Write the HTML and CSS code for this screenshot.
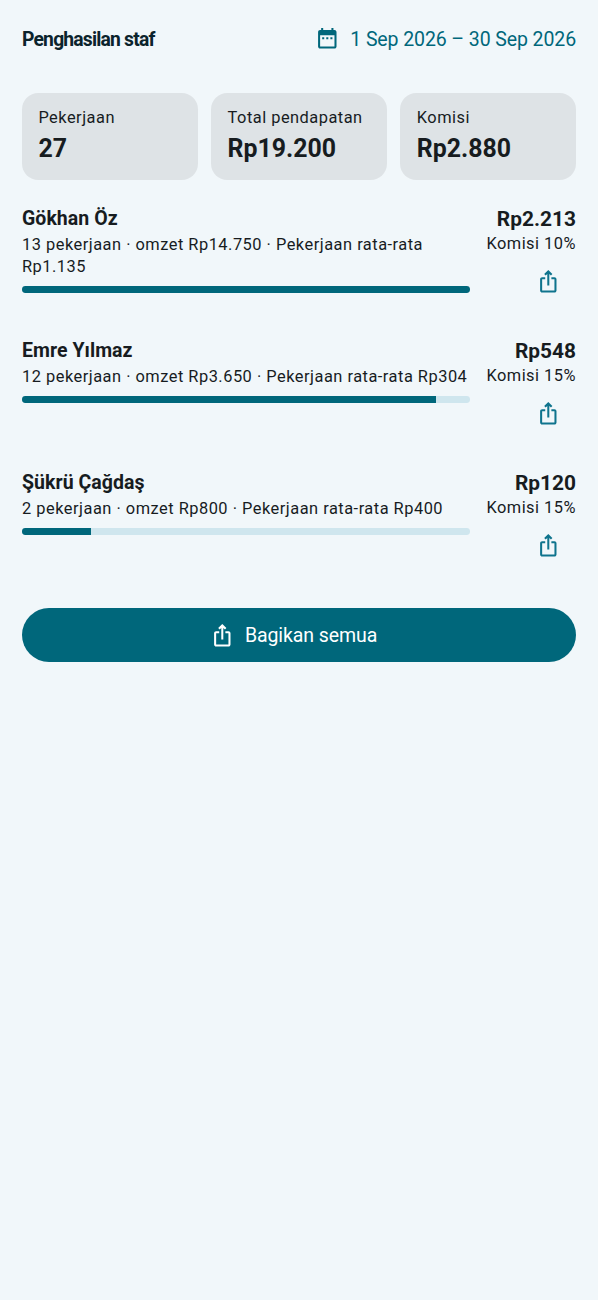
FILE: index.html
```html
<!DOCTYPE html>
<html lang="id">
<head>
<meta charset="utf-8">
<title>Penghasilan staf</title>
<link rel="stylesheet" href="styles.css">
</head>
<body>
<svg width="0" height="0" class="sprite" aria-hidden="true">
  <symbol id="share" viewBox="0 0 24 24"><path d="M16 5l-1.42 1.42-1.59-1.59V16h-1.98V4.83L9.42 6.42 8 5l4-4 4 4zm4 5v11c0 1.1-.9 2-2 2H6c-1.11 0-2-.9-2-2V10c0-1.11.89-2 2-2h3v2H6v11h12V10h-3V8h3c1.1 0 2 .89 2 2z"/></symbol>
  <symbol id="calendar" viewBox="0 0 24 24"><path d="M9 11H7v2h2v-2zm4 0h-2v2h2v-2zm4 0h-2v2h2v-2zm2-7h-1V2h-2v2H8V2H6v2H5c-1.11 0-1.99.9-1.99 2L3 20c0 1.1.89 2 2 2h14c1.1 0 2-.9 2-2V6c0-1.1-.9-2-2-2zm0 16H5V9h14v11z"/></symbol>
</svg>
<main class="page">
  <header class="header">
    <h1 class="title">Penghasilan staf</h1>
    <div class="range"><svg class="icon"><use href="#calendar"/></svg><span class="range-text">1 Sep 2026 – 30 Sep 2026</span></div>
  </header>
  <section class="stats">
    <div class="card"><div class="label">Pekerjaan</div><div class="value">27</div></div>
    <div class="card"><div class="label">Total pendapatan</div><div class="value">Rp19.200</div></div>
    <div class="card"><div class="label">Komisi</div><div class="value">Rp2.880</div></div>
  </section>
  <section class="staff">
    <article class="row">
      <div class="info">
        <h2 class="name">Gökhan Öz</h2>
        <p class="detail">13 pekerjaan · omzet Rp14.750 · Pekerjaan rata-rata Rp1.135</p>
        <div class="track"><div class="fill" style="width:100%"></div></div>
      </div>
      <div class="pay"><div class="amount">Rp2.213</div><div class="rate">Komisi 10%</div><svg class="icon share"><use href="#share"/></svg></div>
    </article>
    <article class="row">
      <div class="info">
        <h2 class="name">Emre Yılmaz</h2>
        <p class="detail">12 pekerjaan · omzet Rp3.650 · Pekerjaan rata-rata Rp304</p>
        <div class="track"><div class="fill" style="width:92.4%"></div></div>
      </div>
      <div class="pay"><div class="amount">Rp548</div><div class="rate">Komisi 15%</div><svg class="icon share"><use href="#share"/></svg></div>
    </article>
    <article class="row">
      <div class="info">
        <h2 class="name">Şükrü Çağdaş</h2>
        <p class="detail">2 pekerjaan · omzet Rp800 · Pekerjaan rata-rata Rp400</p>
        <div class="track"><div class="fill" style="width:15.4%"></div></div>
      </div>
      <div class="pay"><div class="amount">Rp120</div><div class="rate">Komisi 15%</div><svg class="icon share"><use href="#share"/></svg></div>
    </article>
  </section>
  <button class="share-all"><svg class="icon"><use href="#share"/></svg><span class="share-text">Bagikan semua</span></button>
</main>
</body>
</html>
```
FILE: styles.css
```css
* { box-sizing: border-box; }
body { margin: 0; background: #f1f7fa; color: #171c1f; font-family: Roboto, sans-serif; }
.sprite { display: none; }
.page { min-height: 1300px; padding: 0 22px; }
.icon { width: 24.6px; height: 24.6px; fill: currentColor; flex: none; display: block; }
.header { display: flex; justify-content: space-between; align-items: center; height: 77px; }
.title { margin: 0; padding-top: 1px; font-size: 19.3px; font-weight: 700; letter-spacing: -0.8px; color: #0b232c; }
.range { display: flex; align-items: center; gap: 11px; color: #00677b; font-size: 19.5px; white-space: nowrap; }
.range-text { padding-top: 1px; letter-spacing: -0.1px; }
.stats { display: grid; grid-template-columns: repeat(3, 1fr); gap: 13.6px; margin-top: 16px; }
.card { height: 86.6px; border-radius: 16.4px; background: #dee3e6; padding: 13.6px 16.4px; white-space: nowrap; }
.label { font-size: 16.4px; line-height: 22px; letter-spacing: 0.49px; }
.value { font-size: 24.9px; line-height: 33px; font-weight: 700; margin-top: 3.1px; }
.staff { margin-top: 25.4px; }
.row { display: flex; height: 132px; gap: 16.4px; }
.info { flex: 1; min-width: 0; }
.name { margin: 0; font-size: 19.5px; line-height: 27px; font-weight: 700; letter-spacing: 0.05px; }
.detail { margin: 2.2px 0 0; font-size: 16.4px; line-height: 22px; letter-spacing: 0.5px; }
.track { height: 6.8px; margin-top: 7.8px; border-radius: 3.4px; background: #cfe6ee; overflow: hidden; }
.fill { height: 100%; background: #00677b; }
.pay { display: flex; flex-direction: column; align-items: flex-end; white-space: nowrap; }
.amount { font-size: 20.9px; line-height: 28px; font-weight: 700; }
.rate { font-size: 16.4px; line-height: 22px; letter-spacing: 0.49px; }
.share { margin: 14.3px 15px 0 0; color: #0f748d; }
.share-all { display: flex; width: 100%; height: 54.4px; margin-top: 7px; padding: 0 11px 0 0; border: 0; border-radius: 28px; align-items: center; justify-content: center; gap: 10.6px; background: #00677b; color: #fff; font-family: inherit; font-size: 19.5px; }
.share-text { letter-spacing: -0.08px; }
```
